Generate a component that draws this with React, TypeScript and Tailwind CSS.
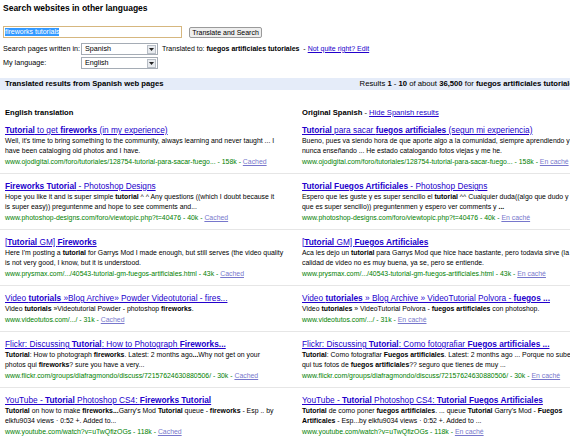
import React from "react";

type Result = { title: string; lines: string[]; url: string };

// rows of the results table: english translation on the left, original on the right
const rows: { en: Result; es: Result }[] = [
  {
    en: {
      title: "**Tutorial** to get **fireworks** (in my experience)",
      lines: [
        "Well, it's time to bring something to the community, always learning and never taught ... I",
        "have been cataloging old photos and I have.",
      ],
      url: "www.ojodigital.com/foro/tutoriales/128754-tutorial-para-sacar-fuego... - 158k - ",
    },
    es: {
      title: "**Tutorial** para sacar **fuegos artificiales** (segun mi experiencia)",
      lines: [
        "Bueno, pues va siendo hora de que aporte algo a la comunidad, siempre aprendiendo y",
        "nunca enseñando ... He estado catalogando fotos viejas y me he.",
      ],
      url: "www.ojodigital.com/foro/tutoriales/128754-tutorial-para-sacar-fuego... - 158k - ",
    },
  },
  {
    en: {
      title: "**Fireworks Tutorial** - Photoshop Designs",
      lines: [
        "Hope you like it and is super simple **tutorial** ^ ^ Any questions ((which I doubt because it",
        "is super easy)) preguntenme and hope to see comments and...",
      ],
      url: "www.photoshop-designs.com/foro/viewtopic.php?t=40476 - 40k - ",
    },
    es: {
      title: "**Tutorial Fuegos Artificiales** - Photoshop Designs",
      lines: [
        "Espero que les guste y es super sencillo el **tutorial** ^^ Cualquier duda((algo que dudo y",
        "que es super sencillo)) preguntenmen y espero ver comments y **...**",
      ],
      url: "www.photoshop-designs.com/foro/viewtopic.php?t=40476 - 40k - ",
    },
  },
  {
    en: {
      title: "[**Tutorial** GM] **Fireworks**",
      lines: [
        "Here I'm posting a **tutorial** for Garrys Mod I made enough, but still serves (the video quality",
        "is not very good, I know, but it is understood.",
      ],
      url: "www.prysmax.com/.../40543-tutorial-gm-fuegos-artificiales.html - 43k - ",
    },
    es: {
      title: "[**Tutorial** GM] **Fuegos Artificiales**",
      lines: [
        "Aca les dejo un **tutorial** para Garrys Mod que hice hace bastante, pero todavia sirve (la",
        "calidad de video no es muy buena, ya se, pero se entiende.",
      ],
      url: "www.prysmax.com/.../40543-tutorial-gm-fuegos-artificiales.html - 43k - ",
    },
  },
  {
    en: {
      title: "Video **tutorials** »Blog Archive» Powder Videotutorial - fires...",
      lines: ["Video **tutorials** »Videotutorial Powder - photoshop **fireworks**."],
      url: "www.videotutos.com/.../ - 31k - ",
    },
    es: {
      title: "Video **tutoriales** » Blog Archive » VideoTutorial Polvora - **fuegos ...**",
      lines: ["Video **tutoriales** » VideoTutorial Polvora - **fuegos artificiales** con photoshop."],
      url: "www.videotutos.com/.../ - 31k - ",
    },
  },
  {
    en: {
      title: "Flickr: Discussing **Tutorial**: How to Photograph **Fireworks...**",
      lines: [
        "**Tutorial**: How to photograph **fireworks**. Latest: 2 months ago**...**Why not get on your",
        "photos qui **fireworks**? sure you have a very...",
      ],
      url: "www.flickr.com/groups/diafragmondo/discuss/72157624630880506/ - 30k - ",
    },
    es: {
      title: "Flickr: Discussing **Tutorial**: Como fotografiar **Fuegos artificiales ...**",
      lines: [
        "**Tutorial**: Como fotografiar **Fuegos artificiales**. Latest: 2 months ago ... Porque no subes",
        "qui tus fotos de **fuegos artificiales**?? seguro que tienes de muy ...",
      ],
      url: "www.flickr.com/groups/diafragmondo/discuss/72157624630880506/ - 30k - ",
    },
  },
  {
    en: {
      title: "YouTube - **Tutorial** Photoshop CS4: **Fireworks Tutorial**",
      lines: [
        "**Tutorial** on how to make **fireworks...**Garry's Mod **Tutorial** queue - **fireworks** - Esp .. by",
        "elkfu9034 views · 0:52 +. Added to...",
      ],
      url: "www.youtube.com/watch?v=uTwQfizOGs - 118k - ",
    },
    es: {
      title: "YouTube - **Tutorial** Photoshop CS4: **Tutorial Fuegos Artificiales**",
      lines: [
        "**Tutorial** de como poner **fuegos artificiales**. ... queue **Tutorial** Garry's Mod - **Fuegos**",
        "**Artificales** - Esp...by elkfu9034 views · 0:52 +. Added to ...",
      ],
      url: "www.youtube.com/watch?v=uTwQfizOGs - 118k - ",
    },
  },
];

function Rich({ text }: { text: string }) {
  const parts = text.split("**");
  return (
    <>
      {parts.map((p, i) => (i % 2 ? <b key={i}>{p}</b> : <span key={i}>{p}</span>))}
    </>
  );
}

function ResultCell({ r, cached }: { r: Result; cached: string }) {
  return (
    <div className="whitespace-nowrap">
      <div className="text-[8.3px] leading-[12px]">
        <a className="text-[#2200cc] underline">
          <Rich text={r.title} />
        </a>
      </div>
      {r.lines.map((l, i) => (
        <div key={i} className="text-[6.9px] leading-[10px] text-black">
          <Rich text={l} />
        </div>
      ))}
      <div className="text-[6.9px] leading-[11px] text-[#008000]">
        {r.url}
        <a className="text-[#7777cc] underline">{cached}</a>
      </div>
    </div>
  );
}

function Select({ value }: { value: string }) {
  return (
    <div className="flex h-[12px] w-[77px] items-center border border-[#a5acb5] bg-white">
      <span className="flex-1 pl-[3px] text-[7.2px] leading-none text-black">{value}</span>
      <span className="mr-[1px] flex h-[9px] w-[9px] items-center justify-center border border-[#b8bec6] bg-[#e8ebef]">
        <svg width="5" height="3" viewBox="0 0 5 3">
          <path d="M0 0h5L2.5 3z" fill="#222" />
        </svg>
      </span>
    </div>
  );
}

export default function App() {
  return (
    <div className="h-[440px] w-[570px] overflow-hidden bg-white font-['Liberation_Sans',Arial,sans-serif] text-black">
      <div className="w-[584px]">
        {/* Header and form */}
        <div className="px-[3px] pt-[2px]">
          <h1 className="text-[8.5px] font-bold leading-[12px]">Search websites in other languages</h1>

          <div className="mt-[12px] flex items-center">
            <div className="flex h-[12px] w-[179px] items-center border border-[#d6b77f] bg-white pl-[1px]">
              <span className="bg-[#3399ff] text-[7px] leading-[8px] text-white">fireworks tutorials</span>
            </div>
            <button className="ml-[7px] h-[11px] w-[73px] rounded-[2px] border border-[#9a9a9a] bg-[#eeeeee] text-[7px] leading-none text-black">
              Translate and Search
            </button>
          </div>

          <div className="mt-[5px] flex items-center text-[7.2px]">
            <span className="w-[78px]">Search pages written in:</span>
            <Select value="Spanish" />
            <span className="ml-[4px] text-[7px]">
              Translated to: <b>fuegos artificiales tutoriales</b> &nbsp;-{" "}
              <a className="text-[#2200cc] underline">Not quite right? Edit</a>
            </span>
          </div>

          <div className="mt-[2px] flex items-center text-[7.2px]">
            <span className="w-[78px]">My language:</span>
            <Select value="English" />
          </div>
        </div>

        {/* Blue summary bar */}
        <div className="mt-[9px] flex h-[12px] items-center justify-between whitespace-nowrap bg-[#e5ecf9] pl-[5px] pr-[6px] text-[7.7px]">
          <b>Translated results from Spanish web pages</b>
          <span>
            Results <b>1</b> - <b>10</b> of about <b>36,500</b> for <b>fuegos artificiales tutoriales</b>
          </span>
        </div>

        {/* Column headings */}
        <div className="mt-[18px] grid grid-cols-[297px_1fr] text-[7.6px] leading-[10px]">
          <b className="pl-[5px]">English translation</b>
          <span className="pl-[5px]">
            <b>Original Spanish</b> - <a className="text-[#2200cc] underline">Hide Spanish results</a>
          </span>
        </div>

        {/* Results */}
        <div>
          {rows.map((row, i) => (
            <div key={i} className="grid grid-cols-[297px_1fr] border-b border-[#e6e6e6] py-[6px]">
              <div className="overflow-hidden pl-[5px]">
                <ResultCell r={row.en} cached="Cached" />
              </div>
              <div className="overflow-hidden pl-[5px]">
                <ResultCell r={row.es} cached="En caché" />
              </div>
            </div>
          ))}
        </div>
      </div>
    </div>
  );
}
